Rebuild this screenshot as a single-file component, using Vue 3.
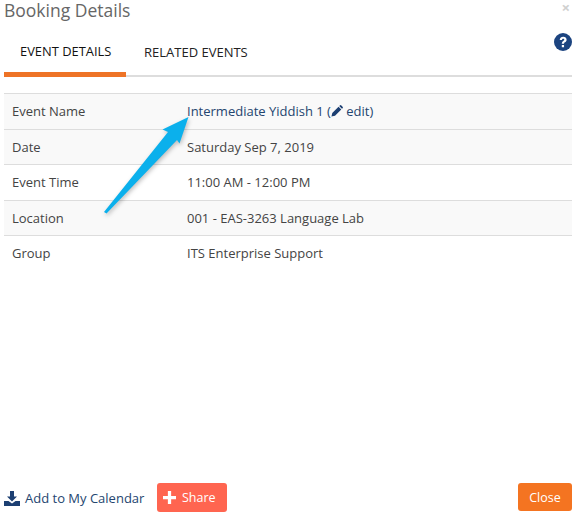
<template>
  <div class="dialog">
    <header class="head">
      <h2>Booking Details</h2>
      <span class="close-x">×</span>
    </header>

    <div class="tabs-row">
      <nav class="tabs">
        <a v-for="(t, i) in tabs" :key="t" class="tab" :class="{ active: i === 0 }">{{ t }}</a>
      </nav>
      <svg class="help" viewBox="0 0 24 24" width="18" height="18">
        <circle cx="12" cy="12" r="12" fill="#1c4480" />
        <path d="M7.600 9.200C7.900 6.400 9.800 5 12.300 5c2.600 0 4.500 1.600 4.500 3.900 0 1.800-1 2.700-2.200 3.500-.9.600-1.200 1-1.200 2h-3c0-2 .6-3 1.900-3.900.9-.6 1.400-1 1.400-1.600 0-.8-.6-1.300-1.400-1.300-.9 0-1.500.6-1.700 1.800z" fill="#fff" />
        <rect x="10.400" y="16" width="3" height="3" fill="#fff" />
      </svg>
    </div>

    <table class="details">
      <tbody>
        <tr v-for="row in rows" :key="row.label" :class="{ shaded: row.shaded }">
          <td class="label">{{ row.label }}</td>
          <td>
            <a v-if="row.link" class="link">{{ row.value }} (<svg class="pencil" viewBox="0 0 14 14" width="12" height="12"><path d="M.5 13.500 1.500 9.300 8.800 2 12 5.200 4.700 12.500zM9.600 1.200 10.300.5a1.300 1.300 0 0 1 1.800 0l1.400 1.400a1.300 1.300 0 0 1 0 1.800l-.7.7z" fill="#1c3f72" /></svg> edit)</a>
            <template v-else>{{ row.value }}</template>
          </td>
        </tr>
      </tbody>
    </table>

    <svg class="arrow" viewBox="0 0 579 523" width="579" height="523">
      <path d="M188.500 117 162.500 129.500 168 132 104 212 106.500 213.500 177 140 179.500 143.500z" fill="#0bb0ec" />
    </svg>

    <footer class="foot">
      <a class="calendar">
        <svg viewBox="0 0 16 15" width="16" height="15">
          <path d="M6 0h4v5.500h3L8 10.500 3 5.500h3z" fill="#1c3f72" />
          <path d="M0 10h4.500L8 12.500 11.500 10H16v5H0z" fill="#1c3f72" />
        </svg>
        Add to My Calendar
      </a>
      <button class="share">
        <svg viewBox="0 0 12 12" width="13" height="13"><path d="M4.500 0h3v4.500H12v3H7.500V12h-3V7.500H0v-3h4.500z" fill="#fff" /></svg>
        Share
      </button>
      <button class="close">Close</button>
    </footer>
  </div>
</template>

<script setup>
const tabs = ['Event Details', 'Related Events']
const rows = [
  { label: 'Event Name', value: 'Intermediate Yiddish 1', link: true, shaded: true },
  { label: 'Date', value: 'Saturday Sep 7, 2019', shaded: true },
  { label: 'Event Time', value: '11:00 AM - 12:00 PM' },
  { label: 'Location', value: '001 - EAS-3263 Language Lab', shaded: true },
  { label: 'Group', value: 'ITS Enterprise Support' }
]
</script>

<style>
html, body { margin: 0; background: #fff; }
</style>

<style scoped>
.dialog {
  position: relative;
  width: 579px;
  height: 523px;
  padding: 0 7px 0 4px;
  box-sizing: border-box;
  display: flex;
  flex-direction: column;
  font-family: "Open Sans", sans-serif;
  font-size: 13px;
  color: #444;
  overflow: hidden;
}
.head { display: flex; justify-content: space-between; height: 38px; }
h2 { margin: 0; font-size: 17.5px; font-weight: 400; line-height: 20px; color: #666; }
.close-x { font-size: 15px; line-height: 15px; font-weight: 700; color: #d0d0d0; margin-right: 2px; }
.tabs-row { display: flex; justify-content: space-between; height: 39px; border-bottom: 2px solid #ddd; box-sizing: border-box; position: relative; }
.tabs { display: flex; }
.tab { padding: 5px 18px 0 0; box-sizing: border-box; text-transform: uppercase; color: #222; margin-bottom: -2px; white-space: nowrap; }
.tab.active { width: 122px; padding: 4px 0 0 16px; margin-right: 18px; border-bottom: 5px solid #ee7326; color: #111; font-size: 12.900px; }
.help { position: absolute; right: 0; top: -5px; }
.details { width: 100%; margin-top: 16px; border-collapse: collapse; }
.details td { height: 35.500px; padding: 0 0 0 8px; box-sizing: border-box; border-top: 1px solid #ddd; }
.details tr.shaded td { background: #f9f9f9; }
.details tr:last-child td { padding-bottom: 2px; }
.label { width: 175px; }
.link { color: #24456f; }
.pencil { vertical-align: -1px; }
.arrow { position: absolute; left: 0; top: 0; pointer-events: none; filter: drop-shadow(1px 2px 2px rgba(0,0,0,.25)); }
.foot { margin-top: auto; height: 40px; padding-top: 1px; box-sizing: border-box; display: flex; align-items: flex-start; }
.calendar { display: flex; align-items: center; gap: 5px; color: #24456f; height: 28px; width: 153px; }
.share { width: 70px; height: 29px; margin: -1px 0 0 0; border: 0; border-radius: 3px; background: #ff6550; color: #fff; font: inherit; font-size: 12.500px; display: flex; align-items: center; gap: 6px; padding: 0 6px; }
.close { width: 54px; height: 28px; margin: -1px 0 0 auto; border: 0; border-radius: 3px; background: #f47421; color: #fff; font: inherit; font-size: 12.500px; }
</style>
